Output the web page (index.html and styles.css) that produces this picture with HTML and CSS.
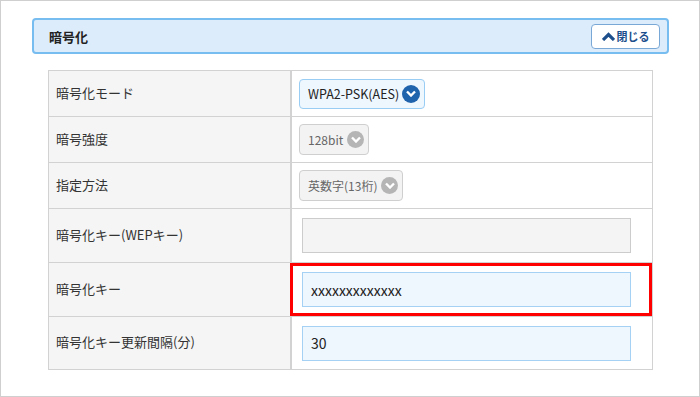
FILE: index.html
```html
<!DOCTYPE html>
<html lang="ja">

<head>
    <meta charset="UTF-8">
    <meta name="viewport" content="width=device-width, initial-scale=1.0">
    <title>暗号化</title>
    <link rel="stylesheet" href="styles.css">
</head>

<body>
    <div class="frame">
        <div class="panel-head">
            <h2>暗号化</h2>
            <button class="close-btn">
                <svg width="13" height="9" viewBox="0 0 13 9"><path d="M1 8 L6.5 2.5 L12 8" fill="none" stroke="#1d4f8c" stroke-width="3.2"/></svg>
                閉じる
            </button>
        </div>
        <table class="settings">
            <tr>
                <th>暗号化モード</th>
                <td>
                    <div class="select active">
                        WPA2-PSK(AES)
                        <span class="arrow"><svg width="10" height="7" viewBox="0 0 10 7"><path d="M1 1.5 L5 5.5 L9 1.5" fill="none" stroke="#fff" stroke-width="2.4"/></svg></span>
                    </div>
                </td>
            </tr>
            <tr>
                <th>暗号強度</th>
                <td>
                    <div class="select">
                        128bit
                        <span class="arrow"><svg width="10" height="7" viewBox="0 0 10 7"><path d="M1 1.5 L5 5.5 L9 1.5" fill="none" stroke="#fff" stroke-width="2.4"/></svg></span>
                    </div>
                </td>
            </tr>
            <tr>
                <th>指定方法</th>
                <td>
                    <div class="select">
                        英数字(13桁)
                        <span class="arrow"><svg width="10" height="7" viewBox="0 0 10 7"><path d="M1 1.5 L5 5.5 L9 1.5" fill="none" stroke="#fff" stroke-width="2.4"/></svg></span>
                    </div>
                </td>
            </tr>
            <tr class="tall">
                <th>暗号化キー(WEPキー)</th>
                <td><input type="text" class="field disabled" value=""></td>
            </tr>
            <tr class="tall">
                <th>暗号化キー</th>
                <td class="highlight"><input type="text" class="field" value="xxxxxxxxxxxxx"></td>
            </tr>
            <tr class="tall last">
                <th>暗号化キー更新間隔(分)</th>
                <td><input type="text" class="field" value="30"></td>
            </tr>
        </table>
    </div>
</body>

</html>
```

FILE: styles.css
```css
body {
    margin: 0;
    font-family: "Noto Sans CJK JP", "Noto Sans", sans-serif;
    color: #333;
    background: #fff;
}

.frame {
    box-sizing: border-box;
    width: 700px;
    height: 397px;
    border: 1px solid #cfcfcf;
    padding: 17px 30px 0 31px;
}

.panel-head {
    box-sizing: border-box;
    height: 36px;
    background: #dcecfb;
    border: 2px solid #78bdf0;
    border-radius: 4px;
    display: flex;
    align-items: center;
    justify-content: space-between;
    padding: 0 7px 0 15px;
}

.panel-head h2 {
    margin: 0;
    font-size: 13px;
    font-weight: bold;
    color: #222;
}

.close-btn {
    box-sizing: border-box;
    width: 69px;
    height: 25px;
    background: #fff;
    border: 1px solid #7aa8d6;
    border-radius: 4px;
    display: flex;
    align-items: center;
    justify-content: center;
    gap: 2px;
    padding: 0;
    font-family: inherit;
    font-size: 11px;
    font-weight: bold;
    color: #1d4f8c;
}

.settings {
    border-collapse: collapse;
    margin: 16px 0 0 16px;
    width: 605px;
}

.settings th,
.settings td {
    border: 1px solid #d2d2d2;
    padding: 0;
    font-size: 13px;
}

.settings td {
    height: 45px;
    padding-left: 7px;
    position: relative;
}

.settings .tall td {
    height: 53px;
}

.settings .last td {
    height: 52px;
}

.settings th {
    width: 234px;
    background: #f5f5f5;
    text-align: left;
    font-weight: normal;
    padding: 0 0 3px 7px;
    line-height: 1;
    border-right-width: 2px;
}

.select {
    box-sizing: border-box;
    display: flex;
    width: fit-content;
    align-items: center;
    gap: 4px;
    height: 31px;
    padding: 0 4px 0 8px;
    border: 1px solid #cfcfcf;
    border-radius: 4px;
    background: #f3f3f3;
    color: #666;
    font-size: 12px;
}

.select.active {
    height: 30px;
    gap: 3px;
    background: #eef6fe;
    border-color: #99cdf3;
    color: #222;
    font-size: 12.5px;
}

.arrow {
    width: 17px;
    height: 17px;
    border-radius: 50%;
    background: #b5b5b5;
    display: flex;
    align-items: center;
    justify-content: center;
}

.select.active .arrow {
    width: 18px;
    height: 18px;
    background: #1f63ac;
}

.field {
    box-sizing: border-box;
    display: block;
    width: 329px;
    height: 35px;
    margin-left: 3px;
    padding: 0 8px;
    border: 1px solid #a4d1f4;
    background: #eef6fe;
    font-family: inherit;
    font-size: 14px;
    color: #222;
}

.field.disabled {
    background: #f4f4f4;
    border-color: #cccccc;
}

.highlight::after {
    content: "";
    position: absolute;
    top: 0;
    left: -2px;
    right: 0;
    bottom: 0;
    border: 3px solid #ff0000;
}
```
